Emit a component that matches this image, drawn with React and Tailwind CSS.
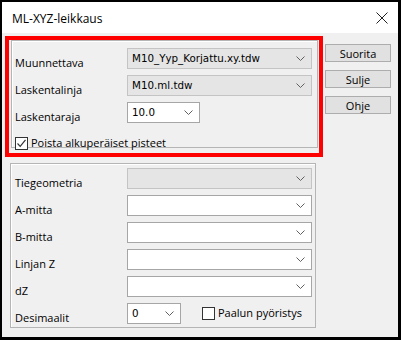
import React from "react";

const ui = { fontFamily: '"Open Sans", "Noto Sans", sans-serif' };
const mono = { fontFamily: '"DejaVu Sans", Verdana, sans-serif' };

function Chevron() {
  return (
    <svg width="9" height="5" viewBox="0 0 9 5" className="shrink-0">
      <path d="M0.5 0.5 L4.5 4.5 L8.5 0.5" fill="none" stroke="#606060" strokeWidth="1" />
    </svg>
  );
}

function Combo({ value, width = "w-[185px]", disabled }) {
  return (
    <div
      className={`${width} h-[21px] flex items-center justify-between pl-[4px] pr-[6px] border ${
        disabled ? "bg-[#e5e5e5] border-[#c4c4c4]" : "bg-white border-[#a6a6a6]"
      }`}
    >
      <span className="text-[10.3px] text-black leading-none" style={mono}>
        {value}
      </span>
      <Chevron />
    </div>
  );
}

function Checkbox({ checked }) {
  return (
    <div className="w-[13px] h-[13px] border border-[#333] bg-white flex items-center justify-center shrink-0">
      {checked && (
        <svg width="11" height="11" viewBox="0 0 11 11">
          <path d="M1.5 5.5 L4.2 8.3 L9.5 1.8" fill="none" stroke="#333" strokeWidth="1.2" />
        </svg>
      )}
    </div>
  );
}

function Row({ label, children }) {
  return (
    <div className="flex items-center h-[21px]">
      <span className="w-[112px] mt-[8px] text-[11px] leading-[14px] text-black" style={ui}>
        {label}
      </span>
      {children}
    </div>
  );
}

function Button({ children }) {
  return (
    <button className="w-[66px] h-[18px] bg-[#e1e1e1] border border-[#adadad] text-[11px] text-black leading-none" style={ui}>
      {children}
    </button>
  );
}

export default function App() {
  return (
    <div className="w-[401px] h-[340px] border-t-2 border-l-2 border-r-[3px] border-b-[3px] border-black bg-[#f0f0f0] flex flex-col overflow-hidden">
      {/* Title bar */}
      <div className="h-[31px] bg-white flex items-center justify-between pl-[10px] pr-[10px] shrink-0">
        <span className="text-[12px] text-black pt-[2px]" style={ui}>
          ML-XYZ-leikkaus
        </span>
        <svg width="12" height="12" viewBox="0 0 12 12">
          <path d="M0.5 0.5 L11.5 11.5 M11.5 0.5 L0.5 11.5" stroke="#222" strokeWidth="1" />
        </svg>
      </div>

      {/* Body */}
      <div className="flex pl-[3px] pt-[3px]">
        <div className="flex flex-col w-[318px]">
          {/* Highlighted group */}
          <div className="h-[121px] border-4 border-[#ff0000] pl-[2px] pr-[1px] pb-[5px]">
            <div className="h-full border border-[#b5b5b5] shadow-[inset_1px_1px_0_#fff] pl-[3px] pt-[7px] flex flex-col">
              <div className="flex flex-col gap-[6px]">
                <Row label="Muunnettava">
                  <Combo value="M10_Yyp_Korjattu.xy.tdw" disabled />
                </Row>
                <Row label="Laskentalinja">
                  <Combo value="M10.ml.tdw" disabled />
                </Row>
                <Row label="Laskentaraja">
                  <Combo value="10.0" width="w-[73px]" />
                </Row>
              </div>
              <div className="flex items-center gap-[3px] mt-[12px]">
                <Checkbox checked />
                <span className="text-[11px] text-black" style={ui}>
                  Poista alkuperäiset pisteet
                </span>
              </div>
            </div>
          </div>

          {/* Lower group */}
          <div className="mt-[6px] ml-[5px] w-[306px] h-[165px] border border-[#b5b5b5] shadow-[inset_1px_1px_0_#fff] pl-[4px] pt-[4px] flex flex-col gap-[6px]">
            <Row label="Tiegeometria">
              <Combo value="" disabled />
            </Row>
            <Row label="A-mitta">
              <Combo value="" />
            </Row>
            <Row label="B-mitta">
              <Combo value="" />
            </Row>
            <Row label="Linjan Z">
              <Combo value="" />
            </Row>
            <Row label="dZ">
              <Combo value="" />
            </Row>
            <Row label="Desimaalit">
              <Combo value="0" width="w-[54px]" />
              <div className="flex items-center gap-[3px] ml-[21px]">
                <Checkbox />
                <span className="text-[11px] text-black" style={ui}>
                  Paalun pyöristys
                </span>
              </div>
            </Row>
          </div>
        </div>

        {/* Buttons */}
        <div className="flex flex-col gap-[8px] ml-[2px] pt-[8px]">
          <Button>Suorita</Button>
          <Button>Sulje</Button>
          <Button>Ohje</Button>
        </div>
      </div>
    </div>
  );
}
